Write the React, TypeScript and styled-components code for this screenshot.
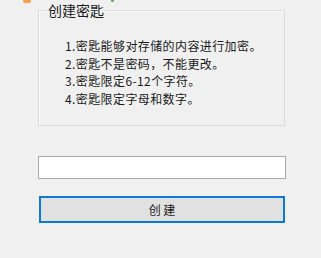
import React from "react";
import styled, { createGlobalStyle } from "styled-components";

const Global = createGlobalStyle`
  html, body { margin: 0; padding: 0; background: #f0f0f0; }
  body { font-family: "Microsoft YaHei", "Noto Sans CJK SC", "Noto Sans", sans-serif; color: #1a1a1a; }
`;

const Page = styled.div`
  position: relative;
  width: 321px;
  height: 258px;
  background: #f0f0f0;
  box-sizing: border-box;
  padding: 0 0 0 38px;
  display: flex;
  flex-direction: column;
  overflow: hidden;
`;

const CornerMark = styled.div`
  position: absolute;
  left: 23px;
  top: -3px;
  width: 8px;
  height: 6px;
  border-radius: 2px;
  background: #f7a24a;
`;

const GreenDot = styled.div`
  position: absolute;
  left: 111px;
  top: -1px;
  width: 3px;
  height: 3px;
  border-radius: 50%;
  background: #4caf50;
`;

const Group = styled.fieldset`
  margin: 0;
  width: 247px;
  height: 126px;
  box-sizing: border-box;
  border: 1px solid #dcdcdc;
  box-shadow: inset 1px 1px 0 #fbfbfb;
  padding: 0;
  min-width: 0;
`;

const Legend = styled.legend`
  padding: 0 2px;
  margin-left: 7px;
  font-size: 14px;
  line-height: 20px;
  color: #1a1a1a;
  background: #f0f0f0;
`;

const Rules = styled.ol`
  list-style: none;
  margin: 0;
  padding: 17px 0 0 26px;
  font-size: 12px;
  line-height: 17.7px;
  letter-spacing: 0.4px;
  color: #1a1a1a;
`;

const Input = styled.input`
  margin-top: 30px;
  width: 248px;
  height: 23px;
  box-sizing: border-box;
  border: 1px solid #ababab;
  background: #ffffff;
  padding: 0 4px;
  outline: none;
  font-size: 12px;
`;

const Button = styled.button`
  margin-top: 17px;
  margin-left: 1px;
  width: 246px;
  height: 27px;
  box-sizing: border-box;
  border: 2px solid #0a7ad8;
  background: #e1e1e1;
  font-family: "Microsoft YaHei", "Noto Sans CJK SC", sans-serif;
  font-size: 12px;
  color: #1a1a1a;
  padding: 0;
  letter-spacing: 0;
`;

const rules = [
  "1.密匙能够对存储的内容进行加密。",
  "2.密匙不是密码，不能更改。",
  "3.密匙限定6-12个字符。",
  "4.密匙限定字母和数字。",
];

export default function App() {
  return (
    <>
      <Global />
      <Page>
        <CornerMark />
        <GreenDot />
        <Group>
          <Legend>创建密匙</Legend>
          <Rules>
            {rules.map((r) => (
              <li key={r}>{r}</li>
            ))}
          </Rules>
        </Group>
        <Input type="text" />
        <Button>创&nbsp;建</Button>
      </Page>
    </>
  );
}
